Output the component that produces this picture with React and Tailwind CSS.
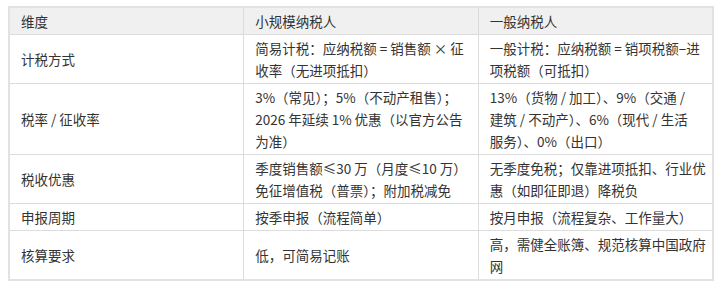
import React from "react";

// each cell holds its lines as they wrap in the original table
const rows = [
  [["计税方式"], ["简易计税：应纳税额 = 销售额 × 征", "收率（无进项抵扣）"], ["一般计税：应纳税额 = 销项税额−进", "项税额（可抵扣）"]],
  [["税率 / 征收率"], ["3%（常见）；5%（不动产租售）；", "2026 年延续 1% 优惠（以官方公告", "为准）"], ["13%（货物 / 加工）、9%（交通 /", "建筑 / 不动产）、6%（现代 / 生活", "服务）、0%（出口）"]],
  [["税收优惠"], ["季度销售额≤30 万（月度≤10 万）", "免征增值税（普票）；附加税减免"], ["无季度免税；仅靠进项抵扣、行业优", "惠（如即征即退）降税负"]],
  [["申报周期"], ["按季申报（流程简单）"], ["按月申报（流程复杂、工作量大）"]],
  [["核算要求"], ["低，可简易记账"], ["高，需健全账簿、规范核算中国政府", "网"]],
];

const cell = "border border-[#dcdcdc] px-[11px] py-[2px] leading-[22px] align-middle text-left font-normal";

export default function App() {
  return (
    <div className="w-[720px] h-[283px] bg-white pl-[8px] pt-[6px] font-['Noto_Sans_CJK_SC',sans-serif] text-[13.5px] text-[#333]">
      <table className="w-[706px] table-fixed border-collapse border-2 border-[#e2e2e2]">
        <thead>
          <tr className="bg-[#f0f0f0]">
            <th className={cell}>维度</th>
            <th className={cell}>小规模纳税人</th>
            <th className={cell}>一般纳税人</th>
          </tr>
        </thead>
        <tbody>
          {rows.map((r, i) => (
            <tr key={i} className="bg-white">
              {r.map((lines, j) => (
                <td key={j} className={cell}>
                  {lines.map((l, k) => (
                    <div key={k} className="whitespace-nowrap">{l}</div>
                  ))}
                </td>
              ))}
            </tr>
          ))}
        </tbody>
      </table>
    </div>
  );
}
